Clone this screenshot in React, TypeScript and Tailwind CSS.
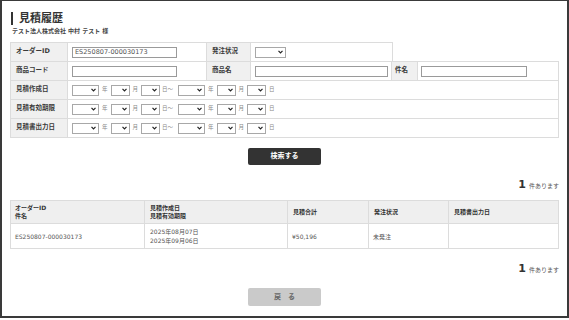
import React from 'react';

const font = "font-['DejaVu_Sans','Noto_Sans_CJK_JP',sans-serif]";

function Chevron() {
  return (
    <svg width="5" height="4" viewBox="0 0 5 4" className="block">
      <path d="M0.5 0.8 L2.5 2.8 L4.5 0.8" fill="none" stroke="#222" strokeWidth="1.2" />
    </svg>
  );
}

function Select({ w }: { w: string }) {
  return (
    <div className={`${w} h-[11px] border border-[#a8a8a8] bg-white flex items-center justify-end pr-[2px]`}>
      <Chevron />
    </div>
  );
}

function Unit({ c }: { c: string }) {
  return <span className="mx-[3px] text-[5.5px] leading-none text-[#888]">{c}</span>;
}

function DateRange() {
  return (
    <div className="flex items-center pl-[4px]">
      <Select w="w-[27px]" />
      <Unit c="年" />
      <Select w="w-[19px]" />
      <Unit c="月" />
      <Select w="w-[19px]" />
      <span className="ml-[2px] text-[5.5px] leading-none text-[#888]">日～</span>
      <div className="ml-[5px]" />
      <Select w="w-[27px]" />
      <Unit c="年" />
      <Select w="w-[19px]" />
      <Unit c="月" />
      <Select w="w-[19px]" />
      <Unit c="日" />
    </div>
  );
}

function Label({ children, w, pl = 'pl-[5px]' }: { children: React.ReactNode; w: string; pl?: string }) {
  return (
    <div className={`${w} ${pl} h-full bg-[#f0f0f0] border-r border-[#dcdcdc] flex items-center text-[6.5px] font-bold text-[#3a3a3a] shrink-0`}>
      {children}
    </div>
  );
}

function Input({ w, value }: { w: string; value?: string }) {
  return (
    <div className={`${w} h-[11px] border border-[#9a9a9a] bg-white flex items-center px-[2px] text-[6.5px] text-[#555] leading-none`}>
      {value}
    </div>
  );
}

function Count() {
  return (
    <div className="flex justify-end items-baseline h-[12px] leading-none">
      <span className="text-[11px] font-bold text-[#333] mr-[3px]">1</span>
      <span className="text-[6px] text-[#555]">件あります</span>
    </div>
  );
}

export default function App() {
  const dateRows = ['見積作成日', '見積有効期限', '見積書出力日'];

  return (
    <div className={`${font} antialiased w-[569px] h-[320px] bg-white`}>
      <div className="w-[569px] h-[318px] border-t border-l-2 border-r-2 border-b-2 border-[#3a3a3a] px-[8px] pt-[11px]">
        {/* Title */}
        <div className="flex items-center">
          <div className="ml-[1px] w-[2px] h-[13px] bg-[#333]" />
          <h1 className="ml-[6px] text-[11px] leading-[13px] font-bold text-[#333]">見積履歴</h1>
        </div>
        <p className="ml-[2px] mt-[2px] text-[6px] leading-[7px] font-bold text-[#444]">テスト法人株式会社 中村 テスト 様</p>

        {/* Search form */}
        <div className="mt-[8px]">
          <div className="flex h-[19px] w-[383px] border-t border-l border-[#dcdcdc]">
            <Label w="w-[57px]">オーダーID</Label>
            <div className="w-[139px] h-full border-r border-[#dcdcdc] flex items-center pl-[4px]">
              <Input w="w-[105px]" value="ES250807-000030173" />
            </div>
            <Label w="w-[44px]">発注状況</Label>
            <div className="flex-1 h-full border-r border-[#dcdcdc] flex items-center pl-[4px]">
              <Select w="w-[31px]" />
            </div>
          </div>
          <div className="flex h-[19px] w-[549px] border-t border-l border-[#dcdcdc]">
            <Label w="w-[57px]">商品コード</Label>
            <div className="w-[139px] h-full border-r border-[#dcdcdc] flex items-center pl-[4px]">
              <Input w="w-[105px]" />
            </div>
            <Label w="w-[44px]">商品名</Label>
            <div className="w-[141px] h-full border-r border-[#dcdcdc] flex items-center pl-[4px]">
              <Input w="w-[133px]" />
            </div>
            <Label w="w-[26px]" pl="pl-[3px]">件名</Label>
            <div className="flex-1 h-full border-r border-[#dcdcdc] flex items-center pl-[3px]">
              <Input w="w-[106px]" />
            </div>
          </div>
          {dateRows.map((label, i) => (
            <div
              key={label}
              className={`flex w-[549px] border-t border-l border-[#dcdcdc] ${i === dateRows.length - 1 ? 'h-[20px] border-b' : 'h-[19px]'}`}
            >
              <Label w="w-[57px]">{label}</Label>
              <div className="flex-1 h-full border-r border-[#dcdcdc] flex items-center">
                <DateRange />
              </div>
            </div>
          ))}
        </div>

        {/* Search button */}
        <div className="flex justify-center w-[549px] mt-[10px]">
          <button className="w-[73px] h-[17px] rounded-[2px] bg-[#333] text-white text-[7px] font-bold flex items-center justify-center">
            検索する
          </button>
        </div>

        <div className="w-[549px] mt-[14px]">
          <Count />
        </div>

        {/* Results */}
        <div className="w-[549px] mt-[9px] border border-[#dcdcdc] text-[6px]">
          <div className="flex h-[23px] bg-[#efefef] border-b border-[#dcdcdc] font-bold text-[#333] leading-[8px]">
            <div className="w-[134px] border-r border-[#dcdcdc] pl-[4px] flex flex-col justify-center">
              <span>オーダーID</span>
              <span>件名</span>
            </div>
            <div className="w-[143px] border-r border-[#dcdcdc] pl-[5px] flex flex-col justify-center">
              <span>見積作成日</span>
              <span>見積有効期限</span>
            </div>
            <div className="w-[81px] border-r border-[#dcdcdc] pl-[5px] flex items-center">見積合計</div>
            <div className="w-[80px] border-r border-[#dcdcdc] pl-[5px] flex items-center">発注状況</div>
            <div className="flex-1 pl-[5px] flex items-center">見積書出力日</div>
          </div>
          <div className="flex h-[24px] text-[#555] leading-[9px]">
            <div className="w-[134px] border-r border-[#dcdcdc] pl-[4px] flex items-center">ES250807-000030173</div>
            <div className="w-[143px] border-r border-[#dcdcdc] pl-[5px] flex flex-col justify-center">
              <span>2025年08月07日</span>
              <span>2025年09月06日</span>
            </div>
            <div className="w-[81px] border-r border-[#dcdcdc] pl-[4px] flex items-center">¥50,196</div>
            <div className="w-[80px] border-r border-[#dcdcdc] pl-[4px] flex items-center">未発注</div>
            <div className="flex-1" />
          </div>
        </div>

        <div className="w-[549px] mt-[14px]">
          <Count />
        </div>

        {/* Back button */}
        <div className="flex justify-center w-[549px] mt-[13px]">
          <button className="w-[73px] h-[18px] rounded-[2px] bg-[#cacaca] text-[#666] text-[7px] font-bold flex items-center justify-center">
            戻　る
          </button>
        </div>
      </div>
    </div>
  );
}
